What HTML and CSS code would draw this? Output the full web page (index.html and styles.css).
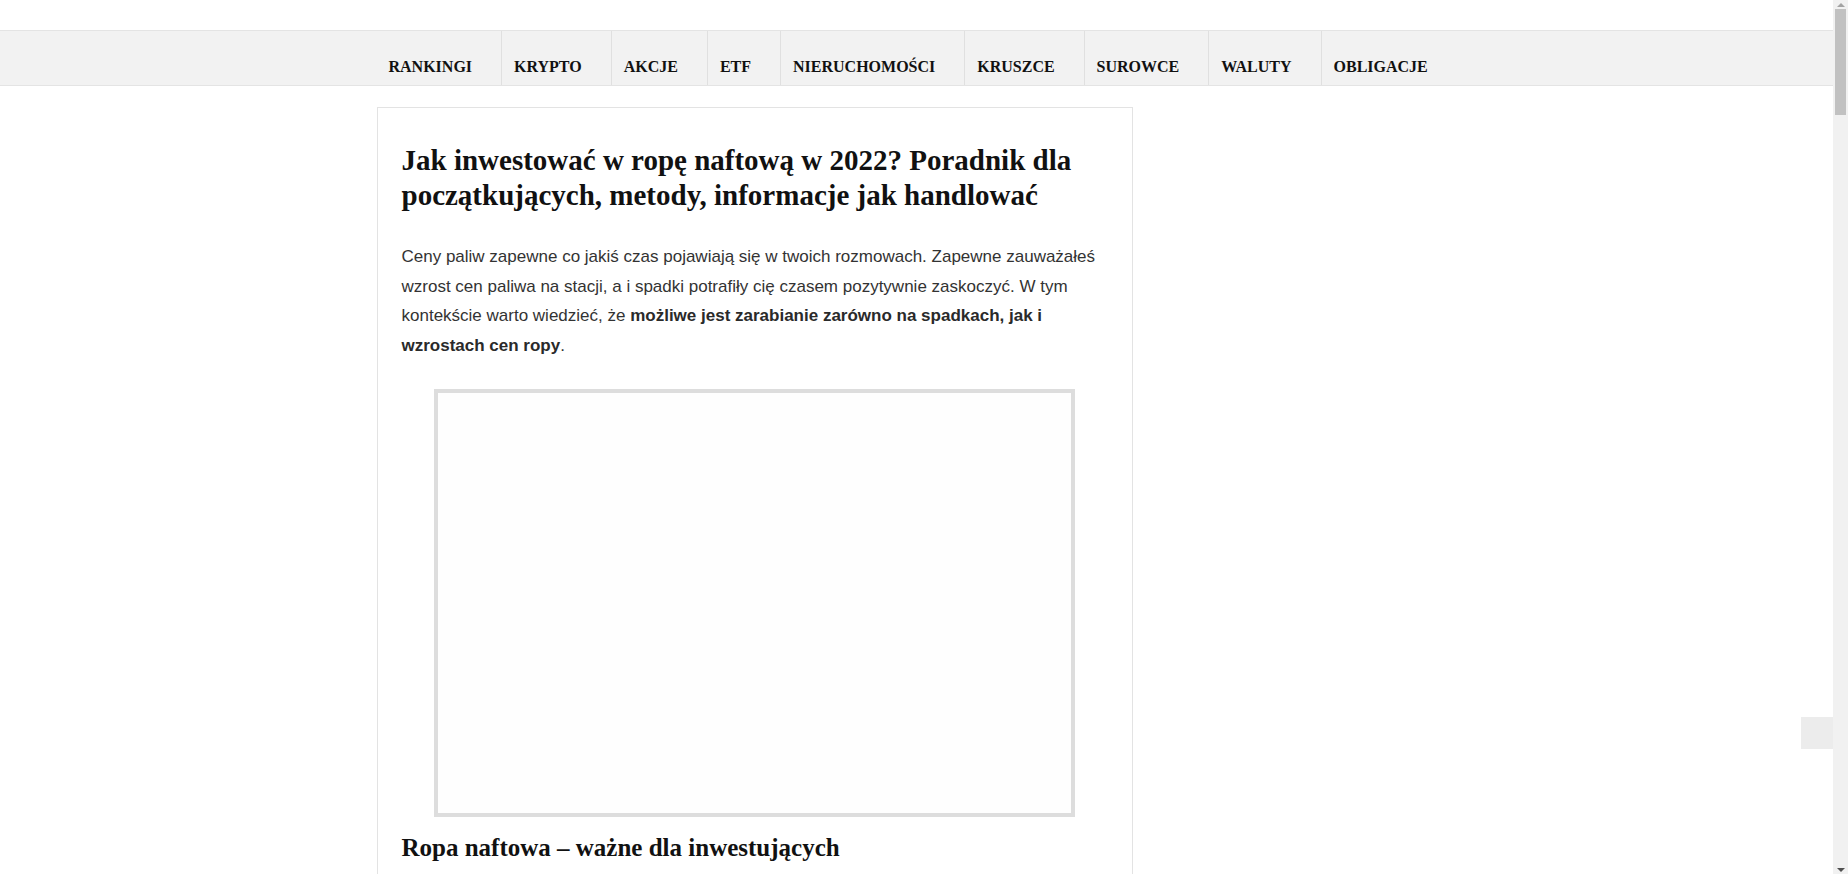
FILE: index.html
```html
<!DOCTYPE html>
<html lang="pl">
<head>
<meta charset="utf-8">
<title>Jak inwestować w ropę naftową w 2022?</title>
<link rel="stylesheet" href="styles.css">
</head>
<body>
<div class="viewport">
  <header class="topbar"></header>
  <nav class="mainnav">
    <ul class="menu">
      <li class="menu-item"><a href="#">RANKINGI</a></li>
      <li class="menu-item"><a href="#">KRYPTO</a></li>
      <li class="menu-item"><a href="#">AKCJE</a></li>
      <li class="menu-item"><a href="#">ETF</a></li>
      <li class="menu-item"><a href="#">NIERUCHOMOŚCI</a></li>
      <li class="menu-item"><a href="#">KRUSZCE</a></li>
      <li class="menu-item"><a href="#">SUROWCE</a></li>
      <li class="menu-item"><a href="#">WALUTY</a></li>
      <li class="menu-item"><a href="#">OBLIGACJE</a></li>
    </ul>
  </nav>
  <div class="layout">
    <main class="content">
      <article class="card">
        <h1 class="title">Jak inwestować w ropę naftową w 2022? Poradnik dla początkujących, metody, informacje jak handlować</h1>
        <p class="text">Ceny paliw zapewne co jakiś czas pojawiają się w twoich rozmowach. Zapewne zauważałeś wzrost cen paliwa na stacji, a i spadki potrafiły cię czasem pozytywnie zaskoczyć. W tym kontekście warto wiedzieć, że <strong>możliwe jest zarabianie zarówno na spadkach, jak i wzrostach cen ropy</strong>.</p>
        <div class="media"></div>
        <h2 class="subtitle">Ropa naftowa – ważne dla inwestujących</h2>
        <p class="text">Ropa naftowa to jeden z najważniejszych surowców na świecie. Jej cena wpływa na koszty transportu, produkcji i ogrzewania, a przez to na inflację i kondycję całej gospodarki.</p>
        <p class="text">Na rynku wyróżnia się dwa główne gatunki ropy: Brent oraz WTI. Ich notowania są punktem odniesienia dla większości transakcji zawieranych na świecie.</p>
      </article>
    </main>
    <aside class="sidebar"></aside>
  </div>
  <a class="to-top" href="#" aria-label="Do góry"></a>
</div>
<div class="scrollbar" aria-hidden="true">
  <div class="sb-btn"><span class="arrow-up"></span></div>
  <div class="sb-thumb"></div>
  <div class="sb-track"></div>
  <div class="sb-btn"><span class="arrow-down"></span></div>
</div>
</body>
</html>
```
FILE: styles.css
```css
html, body {
  margin: 0;
  padding: 0;
}

body {
  background: #ffffff;
  font-family: "Liberation Sans", Arial, sans-serif;
  color: #333333;
  display: flex;
  height: 100vh;
  overflow: hidden;
}

.viewport {
  flex: 1;
  min-width: 0;
  overflow: hidden;
  position: relative;
}

/* fake browser scrollbar */
.scrollbar {
  flex: none;
  width: 15px;
  background: #f1f1f1;
  display: flex;
  flex-direction: column;
  align-items: center;
}

.sb-btn {
  height: 9px;
  width: 15px;
  display: flex;
  align-items: center;
  justify-content: center;
}

.arrow-up {
  width: 0;
  height: 0;
  border-left: 4px solid transparent;
  border-right: 4px solid transparent;
  border-bottom: 4px solid #a3a3a3;
}

.arrow-down {
  width: 0;
  height: 0;
  border-left: 4px solid transparent;
  border-right: 4px solid transparent;
  border-top: 4px solid #505050;
}

.sb-thumb {
  width: 11px;
  height: 106px;
  background: #c1c1c1;
}

.sb-track {
  flex: 1;
}

.topbar {
  height: 30px;
  background: #ffffff;
}

.mainnav {
  background: #f2f2f2;
  border-top: 1px solid #e4e4e4;
  border-bottom: 1px solid #e4e4e4;
}

.menu {
  width: 1080px;
  margin: 0 auto;
  padding: 0;
  list-style: none;
  display: flex;
}

.menu-item {
  padding: 25px 29px 7px 12px;
  line-height: 22px;
}

.menu-item + .menu-item {
  border-left: 1px solid #e0e0e0;
}

.menu-item a {
  font-family: "Liberation Serif", "Times New Roman", serif;
  font-weight: bold;
  font-size: 16px;
  color: #111111;
  text-decoration: none;
}

.layout {
  width: 1080px;
  margin: 21px auto 0;
  display: flex;
  align-items: flex-start;
}

.content {
  width: 70%;
}

.sidebar {
  width: 30%;
}

.card {
  border: 1px solid #e3e3e3;
  padding: 24px;
  background: #ffffff;
}

.title {
  font-family: "Liberation Serif", "Times New Roman", serif;
  font-weight: bold;
  font-size: 29px;
  line-height: 35px;
  color: #111111;
  margin: 11px 0 29px;
}

.text {
  font-size: 17px;
  line-height: 29.5px;
  margin: 0 0 20px;
  color: #333333;
}

.text strong {
  color: #2a2a2a;
}

.media {
  width: 633px;
  height: 420px;
  border: 4px solid #dddddd;
  margin: 29px auto 15px;
  background: #fefefe;
}

.subtitle {
  font-family: "Liberation Serif", "Times New Roman", serif;
  font-weight: bold;
  font-size: 25px;
  line-height: 32px;
  color: #111111;
  margin: 0 0 24px;
}

.to-top {
  position: absolute;
  right: 0;
  top: 717px;
  width: 32px;
  height: 32px;
  background: #ececec;
}
```
